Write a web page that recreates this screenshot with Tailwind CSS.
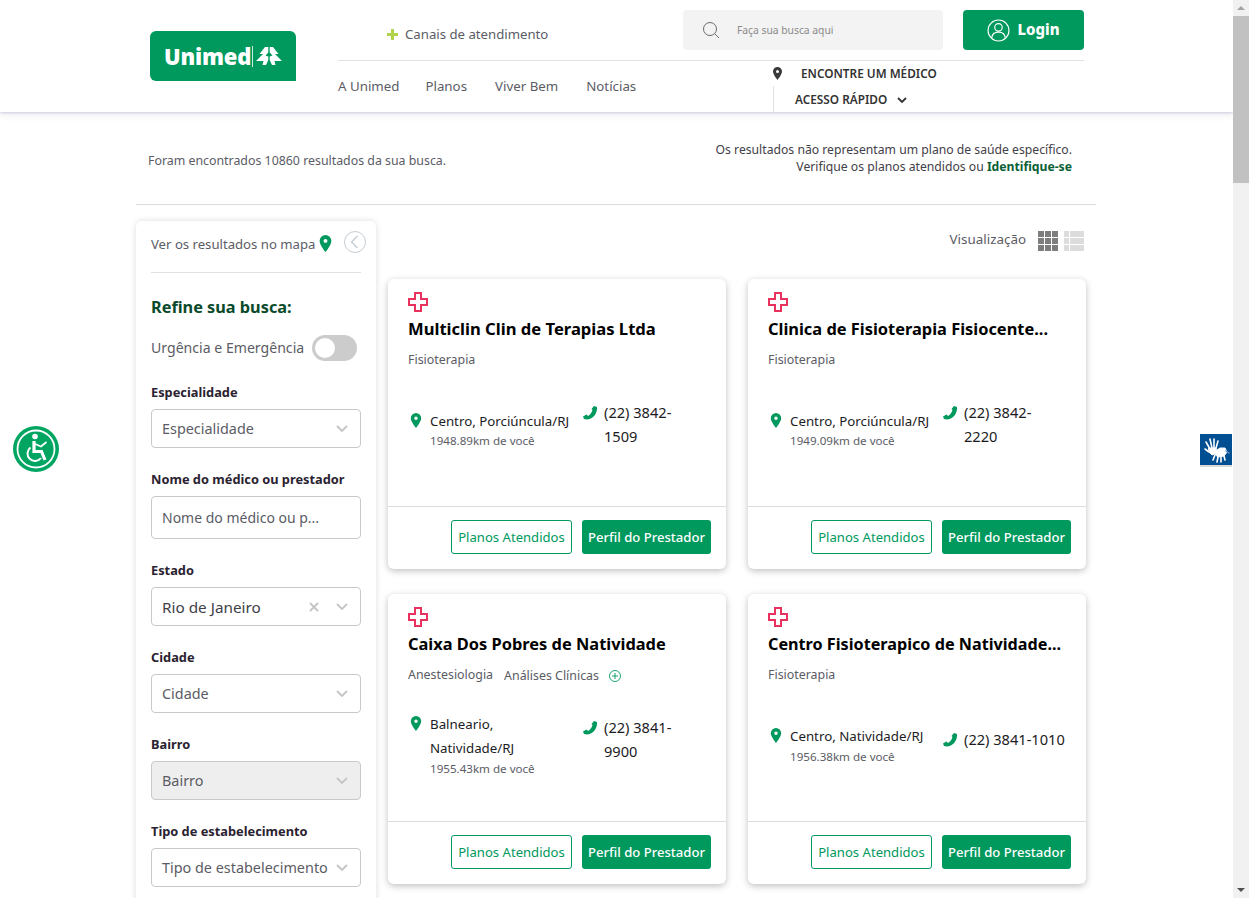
<!DOCTYPE html>
<html lang="pt-BR">
<head>
  <meta charset="UTF-8">
  <title>Unimed - Resultados da busca</title>
  <script src="https://cdn.jsdelivr.net/npm/@tailwindcss/browser@4"></script>
</head>
<body class="bg-white text-[#5b5c65] font-['Noto_Sans',sans-serif] antialiased h-screen overflow-hidden">
  <!-- Header -->
  <header class="h-[112px] w-[1233px] bg-white shadow-[0_1px_3px_rgba(110,110,160,0.32),0_4px_8px_rgba(110,110,160,0.07)] relative">
    <div class="ml-[150px] w-[934px] flex">
      <div class="w-[188px] pt-[31px] shrink-0">
        <div class="w-[146px] h-[50px] bg-[#00995d] rounded-t-[6px] rounded-bl-[6px] flex items-center pl-[14px] text-white">
          <span class="text-[22px] font-black leading-none tracking-[-0.2px] w-[88px] whitespace-nowrap">Unimed</span>
          <span class="w-px h-[21px] bg-white/80"></span>
          <svg class="ml-[3px]" width="26" height="18" viewBox="0 0 26 18" fill="#fff"><path d="M12.3 0H9L3.500 7H7L0 14H7.500L6.500 18H10L12.300 13V9.500L9.500 8.500L12.300 5.500Z"/><path d="M13.700 0H17L22.500 7H19L26 14H18.500L19.500 18H16L13.700 13V9.500L16.500 8.500L13.700 5.500Z"/></svg>
        </div>
      </div>
      <div class="flex-1">
        <div class="flex h-[61px] border-b border-[#e2e2e2]">
          <div class="w-[345px] flex items-center pl-[49px] pt-[9px] gap-[7px] text-[13.2px]">
            <svg width="11" height="11" viewBox="0 0 11 11" fill="#b1d34b"><path d="M4 0h3v4h4v3H7v4H4V7H0V4h4z"/></svg>
            <span>Canais de atendimento</span>
          </div>
          <div class="w-[260px] h-[40px] mt-[10px] bg-[#f3f3f3] rounded-[4px] flex items-center pl-[19px] gap-[17px]">
            <svg width="18" height="18" viewBox="0 0 18 18" fill="none" stroke="#6b6b6b" stroke-width="1"><circle cx="8" cy="8" r="6.5"/><path d="M12.8 12.8 L17 17"/></svg>
            <span class="text-[10.3px] text-[#8a8a8a] mt-px">Faça sua busca aqui</span>
          </div>
          <div class="ml-[20px] w-[121px] h-[40px] mt-[10px] bg-[#00995d] rounded-[4px] flex items-center justify-center gap-[7px] text-white">
            <svg width="23" height="23" viewBox="0 0 22 22" fill="none" stroke="#fff" stroke-width="1.1"><circle cx="11" cy="11" r="10"/><circle cx="11" cy="8" r="3.6"/><path d="M4.5 18 C5 14 8 12.6 11 12.6 C14 12.6 17 14 17.5 18"/></svg>
            <span class="text-[15px] font-extrabold leading-none -mt-[2px]">Login</span>
          </div>
        </div>
        <div class="flex">
          <nav class="w-[435px] flex gap-[28px] pt-[16px] text-[13.3px]">
            <a>A Unimed</a><a class="-ml-[2px]">Planos</a><a>Viver Bem</a><a>Notícias</a>
          </nav>
          <div class="text-[11.8px] font-semibold text-[#333]">
            <div class="flex items-center h-[25px]">
              <svg width="9" height="13" viewBox="0 0 9 13" fill="#3a3a3a"><path fill-rule="evenodd" d="M4.5 0A4.5 4.5 0 0 1 9 4.5C9 7.5 4.5 13 4.5 13S0 7.5 0 4.5A4.5 4.5 0 0 1 4.5 0zm0 3a1.5 1.5 0 1 0 0 3 1.5 1.5 0 0 0 0-3z"/></svg>
              <span class="ml-[19px]">ENCONTRE UM MÉDICO</span>
            </div>
            <div class="flex items-center h-[26px] border-l border-[#e2e2e2] pl-[21px]">
              <span class="mt-[2px]">ACESSO RÁPIDO</span>
              <svg class="ml-[10px] mt-[2px]" width="10" height="7" viewBox="0 0 10 7" fill="none" stroke="#333" stroke-width="1.8"><path d="M1 1l4 4 4-4"/></svg>
            </div>
          </div>
        </div>
      </div>
    </div>
  </header>

  <main class="w-[1233px] pl-[136px]">
    <!-- Result summary -->
    <div class="w-[960px] h-[93px] border-b border-[#dcdcdc] flex justify-between pl-[12px] pr-[24px] pt-[29px]">
      <p class="text-[12.37px] mt-[11px] leading-[18px]">Foram encontrados 10860 resultados da sua busca.</p>
      <p class="text-[12.2px] text-right leading-[17px] text-[#3f4048]">Os resultados não representam um plano de saúde específico.<br>Verifique os planos atendidos ou <b class="text-[#0a5f35]">Identifique-se</b></p>
    </div>

    <div class="flex mt-[16px]">
      <!-- Sidebar -->
      <aside class="w-[240px] h-[800px] shrink-0 rounded-[6px] bg-white shadow-[0_0_6px_rgba(0,0,0,0.14)] px-[15px]">
        <div class="h-[52px] border-b border-[#e2e2e2] flex items-center text-[13.15px] relative">
          <span class="-mt-[4px]">Ver os resultados no mapa</span>
          <svg class="ml-[4px] -mt-[6px]" width="13" height="17" viewBox="0 0 9 13" fill="#00995d"><path fill-rule="evenodd" d="M4.5 0A4.5 4.5 0 0 1 9 4.5C9 7.5 4.5 13 4.5 13S0 7.5 0 4.5A4.5 4.5 0 0 1 4.5 0zm0 3a1.5 1.5 0 1 0 0 3 1.5 1.5 0 0 0 0-3z"/></svg>
          <svg class="absolute left-[193px] top-[10px]" width="22" height="22" viewBox="0 0 22 22" fill="none" stroke="#c4ccd2" stroke-width="1"><circle cx="11" cy="11" r="10.5"/><path d="M13.5 5 L7.5 11 L13.5 17" stroke-width="1.4"/></svg>
        </div>
        <h2 class="text-[16.3px] font-bold text-[#0a4a2a] mt-[22px] leading-[24px]">Refine sua busca:</h2>
        <div class="flex items-center justify-between mt-[16px] h-[26px] pr-[4px] text-[14.1px]">
          <span class="-mt-[1px]">Urgência e Emergência</span>
          <span class="w-[45px] h-[26px] rounded-full bg-[#cccccc] p-[3px]"><span class="block w-[20px] h-[20px] rounded-full bg-white"></span></span>
        </div>

        <label class="block text-[12.8px] font-bold text-[#2a2230] mt-[22px] leading-[18px]">Especialidade</label>
        <div class="mt-[8px] h-[39px] pt-px border border-[#c9c9c9] rounded-[4px] flex items-center justify-between pl-[10px] pr-[12px] text-[14.4px]">
          <span>Especialidade</span>
          <svg width="12" height="8" viewBox="0 0 12 8" fill="none" stroke="#c4c4c4" stroke-width="1.8"><path d="M1 1l5 5 5-5"/></svg>
        </div>

        <label class="block text-[12.8px] font-bold text-[#2a2230] mt-[22px] leading-[18px]">Nome do médico ou prestador</label>
        <div class="mt-[8px] h-[43px] border border-[#c9c9c9] rounded-[4px] flex items-center pl-[10px] text-[14px]">
          <span>Nome do médico ou p...</span>
        </div>

        <label class="block text-[12.8px] font-bold text-[#2a2230] mt-[22px] leading-[18px]">Estado</label>
        <div class="mt-[8px] h-[39px] pt-px border border-[#c9c9c9] rounded-[4px] flex items-center pl-[10px] pr-[12px] text-[15.3px]">
          <span class="text-[#3f4048]">Rio de Janeiro</span>
          <svg class="ml-auto mr-[17px]" width="10" height="10" viewBox="0 0 10 10" fill="none" stroke="#c4c4c4" stroke-width="1.8"><path d="M1 1l8 8M9 1l-8 8"/></svg>
          <svg width="12" height="8" viewBox="0 0 12 8" fill="none" stroke="#c4c4c4" stroke-width="1.8"><path d="M1 1l5 5 5-5"/></svg>
        </div>

        <label class="block text-[12.8px] font-bold text-[#2a2230] mt-[22px] leading-[18px]">Cidade</label>
        <div class="mt-[8px] h-[39px] pt-px border border-[#c9c9c9] rounded-[4px] flex items-center justify-between pl-[10px] pr-[12px] text-[14.4px]">
          <span>Cidade</span>
          <svg width="12" height="8" viewBox="0 0 12 8" fill="none" stroke="#c4c4c4" stroke-width="1.8"><path d="M1 1l5 5 5-5"/></svg>
        </div>

        <label class="block text-[12.8px] font-bold text-[#2a2230] mt-[22px] leading-[18px]">Bairro</label>
        <div class="mt-[8px] h-[39px] pt-px border border-[#c9c9c9] bg-[#eeeeee] rounded-[4px] flex items-center justify-between pl-[10px] pr-[12px] text-[14.4px]">
          <span>Bairro</span>
          <svg width="12" height="8" viewBox="0 0 12 8" fill="none" stroke="#c4c4c4" stroke-width="1.8"><path d="M1 1l5 5 5-5"/></svg>
        </div>

        <label class="block text-[12.8px] font-bold text-[#2a2230] mt-[22px] leading-[18px]">Tipo de estabelecimento</label>
        <div class="mt-[8px] h-[39px] pt-px border border-[#c9c9c9] rounded-[4px] flex items-center justify-between pl-[10px] pr-[12px] text-[14.4px]">
          <span>Tipo de estabelecimento</span>
          <svg width="12" height="8" viewBox="0 0 12 8" fill="none" stroke="#c4c4c4" stroke-width="1.8"><path d="M1 1l5 5 5-5"/></svg>
        </div>
      </aside>

      <!-- Results -->
      <section class="ml-[12px] w-[698px]">
        <div class="h-[58px] pr-[2px] flex justify-end items-start pt-[10px] text-[13.4px]">
          <span class="leading-[16px]">Visualização</span>
          <div class="ml-[12px] grid grid-cols-3 gap-px w-[20px] h-[20px] mr-[6px]">
            <i class="bg-[#7d7d7d]"></i><i class="bg-[#7d7d7d]"></i><i class="bg-[#7d7d7d]"></i><i class="bg-[#7d7d7d]"></i><i class="bg-[#7d7d7d]"></i><i class="bg-[#7d7d7d]"></i><i class="bg-[#7d7d7d]"></i><i class="bg-[#7d7d7d]"></i><i class="bg-[#7d7d7d]"></i>
          </div>
          <div class="grid grid-cols-[5px_14px] gap-px w-[20px] h-[20px]">
            <i class="bg-[#dcdcdc]"></i><i class="bg-[#dcdcdc]"></i><i class="bg-[#dcdcdc]"></i><i class="bg-[#dcdcdc]"></i><i class="bg-[#dcdcdc]"></i><i class="bg-[#dcdcdc]"></i>
          </div>
        </div>

        <div class="grid grid-cols-[338px_338px] gap-x-[22px] gap-y-[25px]">
          <!-- Card 1 -->
          <article class="h-[290px] rounded-[6px] bg-white shadow-[0_2px_7px_rgba(0,0,0,0.25)] flex flex-col">
            <div class="flex-1 px-[20px] pt-[13px]">
              <svg width="20" height="20" viewBox="0 0 20 20" fill="none" stroke="#e8315f" stroke-width="2"><path d="M7 1h6v6h6v6h-6v6H7v-6H1V7h6z"/></svg>
              <h3 class="text-[16.6px] font-bold text-black leading-[24px] mt-[5px] whitespace-nowrap">Multiclin Clin de Terapias Ltda</h3>
              <p class="text-[12.4px] mt-[10px] leading-[18px]">Fisioterapia</p>
              <div class="flex mt-[32px]">
                <div class="w-[175px] shrink-0 flex pt-[8px]">
                  <svg class="mt-[4px] mx-[2px] shrink-0" width="12" height="15" viewBox="0 0 9 13" fill="#00995d"><path fill-rule="evenodd" d="M4.5 0A4.5 4.5 0 0 1 9 4.5C9 7.5 4.5 13 4.5 13S0 7.5 0 4.5A4.5 4.5 0 0 1 4.5 0zm0 3a1.5 1.5 0 1 0 0 3 1.5 1.5 0 0 0 0-3z"/></svg>
                  <div class="ml-[6px] whitespace-nowrap">
                    <p class="text-[13.3px] text-[#1c1c24] leading-[24px]">Centro, Porciúncula/RJ</p>
                    <p class="text-[11.6px] leading-[16px]">1948.89km de você</p>
                  </div>
                </div>
                <div class="flex">
                  <svg class="mt-[4px] shrink-0" width="15" height="15" viewBox="0 0 15 15" fill="#00995d"><path d="M11 1l3 1c.4 4-1.500 8-4 10s-5 3-9 2l-1-2.500 3.500-2 1.500 1.500c2-1 4-3.500 4.500-6L8.500 4z"/></svg>
                  <p class="ml-[6px] -mt-px w-[90px] text-[14.6px] text-[#1c1c24] leading-[24px]">(22) 3842-1509</p>
                </div>
              </div>
            </div>
            <div class="h-[63px] border-t border-[#dcdcdc] flex justify-end items-start gap-[10px] pr-[15px] pt-[13px] text-[13.1px]">
              <a class="h-[34px] w-[121px] pt-px rounded-[3px] border border-[#00995d] text-[#00995d] flex items-center justify-center">Planos Atendidos</a>
              <a class="h-[34px] w-[129px] pt-px rounded-[3px] bg-[#00995d] text-white font-medium flex items-center justify-center">Perfil do Prestador</a>
            </div>
          </article>

          <!-- Card 2 -->
          <article class="h-[290px] rounded-[6px] bg-white shadow-[0_2px_7px_rgba(0,0,0,0.25)] flex flex-col">
            <div class="flex-1 px-[20px] pt-[13px]">
              <svg width="20" height="20" viewBox="0 0 20 20" fill="none" stroke="#e8315f" stroke-width="2"><path d="M7 1h6v6h6v6h-6v6H7v-6H1V7h6z"/></svg>
              <h3 class="text-[16.4px] font-bold text-black leading-[24px] mt-[5px] whitespace-nowrap">Clinica de Fisioterapia Fisiocente...</h3>
              <p class="text-[12.4px] mt-[10px] leading-[18px]">Fisioterapia</p>
              <div class="flex mt-[32px]">
                <div class="w-[175px] shrink-0 flex pt-[8px]">
                  <svg class="mt-[4px] mx-[2px] shrink-0" width="12" height="15" viewBox="0 0 9 13" fill="#00995d"><path fill-rule="evenodd" d="M4.5 0A4.5 4.5 0 0 1 9 4.5C9 7.5 4.5 13 4.5 13S0 7.5 0 4.5A4.5 4.5 0 0 1 4.5 0zm0 3a1.5 1.5 0 1 0 0 3 1.5 1.5 0 0 0 0-3z"/></svg>
                  <div class="ml-[6px] whitespace-nowrap">
                    <p class="text-[13.3px] text-[#1c1c24] leading-[24px]">Centro, Porciúncula/RJ</p>
                    <p class="text-[11.6px] leading-[16px]">1949.09km de você</p>
                  </div>
                </div>
                <div class="flex">
                  <svg class="mt-[4px] shrink-0" width="15" height="15" viewBox="0 0 15 15" fill="#00995d"><path d="M11 1l3 1c.4 4-1.500 8-4 10s-5 3-9 2l-1-2.500 3.500-2 1.500 1.500c2-1 4-3.500 4.500-6L8.500 4z"/></svg>
                  <p class="ml-[6px] -mt-px w-[90px] text-[14.6px] text-[#1c1c24] leading-[24px]">(22) 3842-2220</p>
                </div>
              </div>
            </div>
            <div class="h-[63px] border-t border-[#dcdcdc] flex justify-end items-start gap-[10px] pr-[15px] pt-[13px] text-[13.1px]">
              <a class="h-[34px] w-[121px] pt-px rounded-[3px] border border-[#00995d] text-[#00995d] flex items-center justify-center">Planos Atendidos</a>
              <a class="h-[34px] w-[129px] pt-px rounded-[3px] bg-[#00995d] text-white font-medium flex items-center justify-center">Perfil do Prestador</a>
            </div>
          </article>

          <!-- Card 3 -->
          <article class="h-[290px] rounded-[6px] bg-white shadow-[0_2px_7px_rgba(0,0,0,0.25)] flex flex-col">
            <div class="flex-1 px-[20px] pt-[13px]">
              <svg width="20" height="20" viewBox="0 0 20 20" fill="none" stroke="#e8315f" stroke-width="2"><path d="M7 1h6v6h6v6h-6v6H7v-6H1V7h6z"/></svg>
              <h3 class="text-[16.4px] font-bold text-black leading-[24px] mt-[5px] whitespace-nowrap">Caixa Dos Pobres de Natividade</h3>
              <div class="flex items-center mt-[10px] h-[18px] text-[12.4px]">
                <span>Anestesiologia</span><span class="ml-[11px] mt-[2px]">Análises Clínicas</span>
                <svg class="ml-[10px] mt-[2px]" width="12" height="12" viewBox="0 0 12 12" fill="none" stroke="#00995d" stroke-width="0.9"><circle cx="6" cy="6" r="5.500"/><path d="M3 6h6M6 3v6"/></svg>
              </div>
              <div class="flex mt-[32px]">
                <div class="w-[175px] shrink-0 flex -mt-[4px]">
                  <svg class="mt-[4px] mx-[2px] shrink-0" width="12" height="15" viewBox="0 0 9 13" fill="#00995d"><path fill-rule="evenodd" d="M4.5 0A4.5 4.5 0 0 1 9 4.5C9 7.5 4.5 13 4.5 13S0 7.5 0 4.5A4.5 4.5 0 0 1 4.5 0zm0 3a1.5 1.5 0 1 0 0 3 1.5 1.5 0 0 0 0-3z"/></svg>
                  <div class="ml-[6px] whitespace-nowrap">
                    <p class="text-[13.3px] text-[#1c1c24] leading-[24px]">Balneario,<br>Natividade/RJ</p>
                    <p class="text-[11.6px] leading-[16px] mt-px">1955.43km de você</p>
                  </div>
                </div>
                <div class="flex">
                  <svg class="mt-[4px] shrink-0" width="15" height="15" viewBox="0 0 15 15" fill="#00995d"><path d="M11 1l3 1c.4 4-1.500 8-4 10s-5 3-9 2l-1-2.500 3.500-2 1.500 1.500c2-1 4-3.500 4.500-6L8.500 4z"/></svg>
                  <p class="ml-[6px] -mt-px w-[90px] text-[14.6px] text-[#1c1c24] leading-[24px]">(22) 3841-9900</p>
                </div>
              </div>
            </div>
            <div class="h-[63px] border-t border-[#dcdcdc] flex justify-end items-start gap-[10px] pr-[15px] pt-[13px] text-[13.1px]">
              <a class="h-[34px] w-[121px] pt-px rounded-[3px] border border-[#00995d] text-[#00995d] flex items-center justify-center">Planos Atendidos</a>
              <a class="h-[34px] w-[129px] pt-px rounded-[3px] bg-[#00995d] text-white font-medium flex items-center justify-center">Perfil do Prestador</a>
            </div>
          </article>

          <!-- Card 4 -->
          <article class="h-[290px] rounded-[6px] bg-white shadow-[0_2px_7px_rgba(0,0,0,0.25)] flex flex-col">
            <div class="flex-1 px-[20px] pt-[13px]">
              <svg width="20" height="20" viewBox="0 0 20 20" fill="none" stroke="#e8315f" stroke-width="2"><path d="M7 1h6v6h6v6h-6v6H7v-6H1V7h6z"/></svg>
              <h3 class="text-[16.2px] font-bold text-black leading-[24px] mt-[5px] whitespace-nowrap">Centro Fisioterapico de Natividade...</h3>
              <p class="text-[12.4px] mt-[10px] leading-[18px]">Fisioterapia</p>
              <div class="flex mt-[32px]">
                <div class="w-[175px] shrink-0 flex pt-[8px]">
                  <svg class="mt-[4px] mx-[2px] shrink-0" width="12" height="15" viewBox="0 0 9 13" fill="#00995d"><path fill-rule="evenodd" d="M4.5 0A4.5 4.5 0 0 1 9 4.5C9 7.5 4.5 13 4.5 13S0 7.5 0 4.5A4.5 4.5 0 0 1 4.5 0zm0 3a1.5 1.5 0 1 0 0 3 1.5 1.5 0 0 0 0-3z"/></svg>
                  <div class="ml-[6px] whitespace-nowrap">
                    <p class="text-[13.3px] text-[#1c1c24] leading-[24px]">Centro, Natividade/RJ</p>
                    <p class="text-[11.6px] leading-[16px] mt-px">1956.38km de você</p>
                  </div>
                </div>
                <div class="flex pt-[12px]">
                  <svg class="mt-[4px] shrink-0" width="15" height="15" viewBox="0 0 15 15" fill="#00995d"><path d="M11 1l3 1c.4 4-1.500 8-4 10s-5 3-9 2l-1-2.500 3.500-2 1.500 1.500c2-1 4-3.500 4.500-6L8.500 4z"/></svg>
                  <p class="ml-[6px] -mt-px w-[102px] text-[14.6px] text-[#1c1c24] leading-[24px] whitespace-nowrap">(22) 3841-1010</p>
                </div>
              </div>
            </div>
            <div class="h-[63px] border-t border-[#dcdcdc] flex justify-end items-start gap-[10px] pr-[15px] pt-[13px] text-[13.1px]">
              <a class="h-[34px] w-[121px] pt-px rounded-[3px] border border-[#00995d] text-[#00995d] flex items-center justify-center">Planos Atendidos</a>
              <a class="h-[34px] w-[129px] pt-px rounded-[3px] bg-[#00995d] text-white font-medium flex items-center justify-center">Perfil do Prestador</a>
            </div>
          </article>
        </div>
      </section>
    </div>
  </main>

  <!-- Floating accessibility widgets -->
  <div class="fixed left-[13px] top-[426px] w-[46px] h-[46px] rounded-full bg-[#00a562] flex items-center justify-center">
    <svg width="40" height="40" viewBox="0 0 40 40" fill="none" stroke="#fff" stroke-width="1.8">
      <circle cx="20" cy="20" r="18.500"/>
      <circle cx="19" cy="7.500" r="2.800" fill="#fff" stroke="none"/>
      <path d="M18 12V22.500H25.500L29 31" stroke-width="3.200"/>
      <path d="M18 14.500L25 17.500L30.500 13" stroke-width="1.800"/>
      <path d="M14.500 18.500A7.500 7.500 0 1 0 25 29" stroke-width="2"/>
    </svg>
  </div>
  <div class="fixed left-[1200px] top-[434px] w-[32px] h-[33px] bg-[#004f92] border-b-2 border-[#d8d8d8] flex items-center justify-center">
    <svg width="32" height="31" viewBox="0 0 32 31" fill="none" stroke="#fff" stroke-linecap="round">
      <path d="M6 8L10 15M10 5L12 14M14 5L14 14M18 7L16 14M5 15L9 18" stroke-width="1.600"/>
      <path d="M9 14H16L17 19L12 21L9 18Z" fill="#fff" stroke-width="1"/>
      <path d="M14 18L20 14H25L27 18L24 22L18 23Z" fill="#fff" stroke-width="1"/>
      <path d="M15 21L13 26M18 23L17 28M21 23L21 28M24 22L25 26" stroke-width="1.600"/>
      <path d="M26 17L29 19" stroke="#5f8fc0" stroke-width="1.500"/>
    </svg>
  </div>

  <!-- Scrollbar -->
  <div class="fixed right-0 top-0 w-[16px] h-[898px] bg-[#f1f1f1] flex flex-col items-center">
    <div class="h-[16px] flex items-center"><span class="border-x-[4px] border-x-transparent border-b-[4px] border-b-[#a3a3a3]"></span></div>
    <div class="w-full h-[167px] bg-[#c1c1c1]"></div>
    <div class="mt-auto h-[16px] flex items-center"><span class="border-x-[4px] border-x-transparent border-t-[4px] border-t-[#505050]"></span></div>
  </div>
</body>
</html>
